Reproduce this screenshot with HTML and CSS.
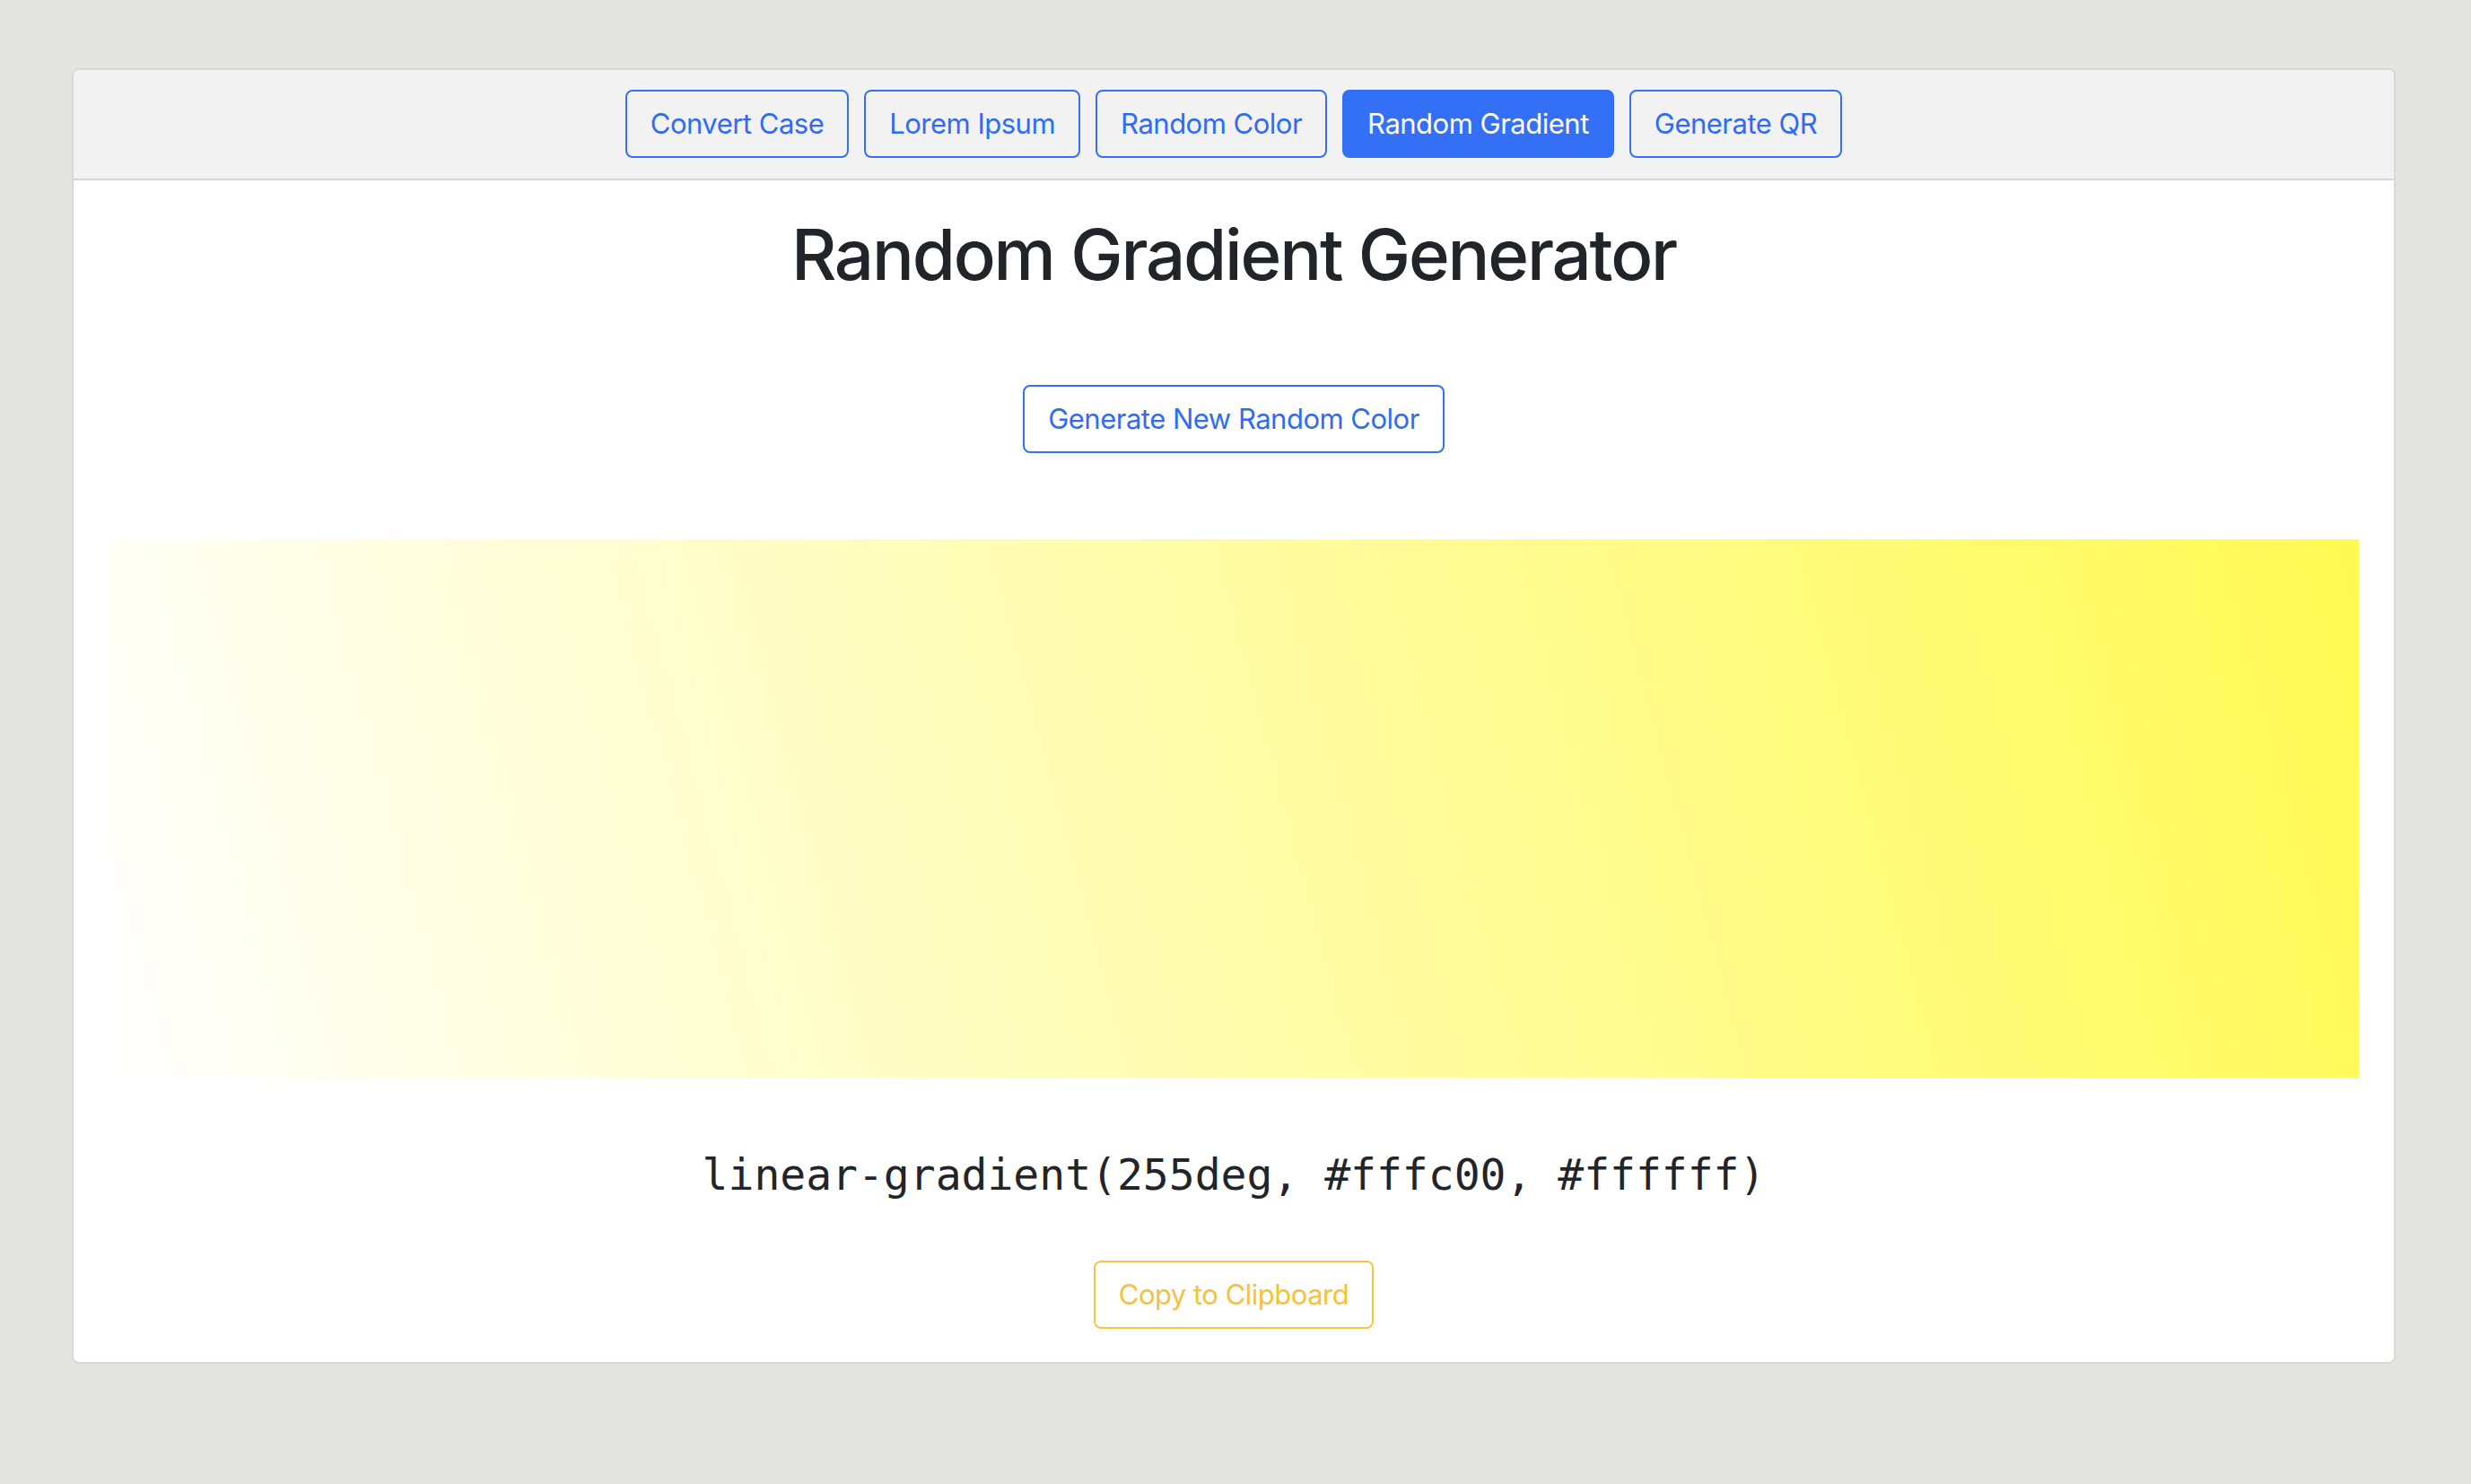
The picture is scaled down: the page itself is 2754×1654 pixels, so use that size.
FILE: index.html
```html
<!DOCTYPE html>
<html lang="en">
<head>
<meta charset="utf-8">
<title>Random Gradient Generator</title>
<link rel="stylesheet" href="styles.css">
</head>
<body>
<div class="card">
  <div class="card-header">
    <nav class="tabs">
      <a class="btn btn-outline">Convert Case</a>
      <a class="btn btn-outline">Lorem Ipsum</a>
      <a class="btn btn-outline">Random Color</a>
      <a class="btn btn-primary">Random Gradient</a>
      <a class="btn btn-outline">Generate QR</a>
    </nav>
  </div>
  <div class="card-body">
    <h1 class="title">Random Gradient Generator</h1>
    <div class="center gen-row">
      <button class="btn btn-outline">Generate New Random Color</button>
    </div>
    <div class="gradient-box" style="background: linear-gradient(255deg, #fffa52, #ffffff);"></div>
    <p class="code">linear-gradient(255deg, #fffc00, #ffffff)</p>
    <div class="center">
      <button class="btn btn-warning-outline">Copy to Clipboard</button>
    </div>
  </div>
</div>
</body>
</html>
```

FILE: styles.css
```css
html, body {
  margin: 0;
  padding: 0;
}
body {
  background: #e4e4e2;
  padding: 76px 84px 0 80px;
  font-family: Inter, "Noto Sans", "Liberation Sans", sans-serif;
  color: #212529;
}
.card {
  background: #ffffff;
  border: 2px solid #d8d8d6;
  border-radius: 8px;
  overflow: hidden;
}
.card-header {
  background: #f2f2f2;
  border-bottom: 2px solid #d6d6d6;
  padding: 22px 0 23px;
}
.tabs {
  display: flex;
  justify-content: center;
  gap: 17px;
}
.btn {
  display: inline-block;
  box-sizing: border-box;
  font-family: Inter, "Noto Sans", "Liberation Sans", sans-serif;
  font-size: 31px;
  font-weight: 400;
  line-height: 48px;
  padding: 12px 26px;
  border: 2px solid #3470f6;
  border-radius: 8px;
  background: transparent;
  color: #2f6cf3;
  text-decoration: none;
  cursor: pointer;
  letter-spacing: -0.5px;
}
.btn-primary {
  background: #3470f6;
  color: #ffffff;
}
.btn-warning-outline {
  border-color: #f8c443;
  color: #f6c13c;
}
.card-body {
  padding: 0 39px 37px;
}
.title {
  margin: 35px 0 0;
  text-align: center;
  font-size: 78px;
  line-height: 96px;
  font-weight: 500;
  letter-spacing: -2.2px;
  color: #212529;
}
.center {
  display: flex;
  justify-content: center;
}
.gen-row {
  margin-top: 97px;
}
.gradient-box {
  margin-top: 96px;
  height: 600px;
}
.code {
  margin: 79px 0 67px;
  text-align: center;
  font-family: "DejaVu Sans Mono", "Liberation Mono", monospace;
  font-size: 48px;
  line-height: 58px;
  color: #212529;
}
```
